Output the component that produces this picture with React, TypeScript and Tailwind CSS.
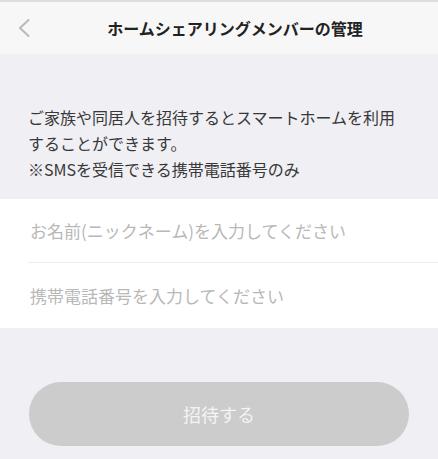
const jp = { fontFamily: '"Noto Sans CJK JP", "Noto Sans", sans-serif' }

export default function App() {
  return (
    <div className="flex h-[459px] w-[438px] flex-col overflow-hidden bg-[#efeff4]" style={jp}>
      {/* Header */}
      <div className="border-t-2 border-[#dedee2] bg-[#f7f7f8]">
        <div className="flex h-[52px] items-center">
          <div className="flex w-[32px] shrink-0 justify-start pl-[18px]">
            <svg width="12" height="18" viewBox="0 0 12 18" fill="none">
              <polyline
                points="10.5,1 2,9 10.5,17"
                stroke="#b9b9bd"
                strokeWidth="2"
                strokeLinecap="round"
                strokeLinejoin="round"
              />
            </svg>
          </div>
          <h1 className="flex-1 text-center text-[16px] font-bold text-[#222]">
            ホームシェアリングメンバーの管理
          </h1>
        </div>
      </div>

      {/* Description */}
      <div className="px-[28px] pt-[50px] pb-[17px] text-[16px] leading-[26px] text-[#383838]">
        <p>ご家族や同居人を招待するとスマートホームを利用</p>
        <p>することができます。</p>
        <p>※SMSを受信できる携帯電話番号のみ</p>
      </div>

      {/* Form */}
      <div className="bg-white">
        <div className="pl-[28px]">
          <input
            className="h-[64px] w-full border-b border-[#ececec] bg-transparent pl-[2px] text-[17px] text-[#333] outline-none placeholder:text-[#b8b8b8]"
            placeholder="お名前(ニックネーム)を入力してください"
          />
          <input
            className="h-[65px] w-full bg-transparent pl-[2px] text-[17px] text-[#333] outline-none placeholder:text-[#b8b8b8]"
            placeholder="携帯電話番号を入力してください"
          />
        </div>
      </div>

      {/* Action */}
      <div className="px-[29px] pt-[54px]">
        <button
          disabled
          className="h-[64px] w-full rounded-full bg-[#cccccc] text-[18px] text-[#f4f4f4]"
        >
          招待する
        </button>
      </div>
    </div>
  )
}
